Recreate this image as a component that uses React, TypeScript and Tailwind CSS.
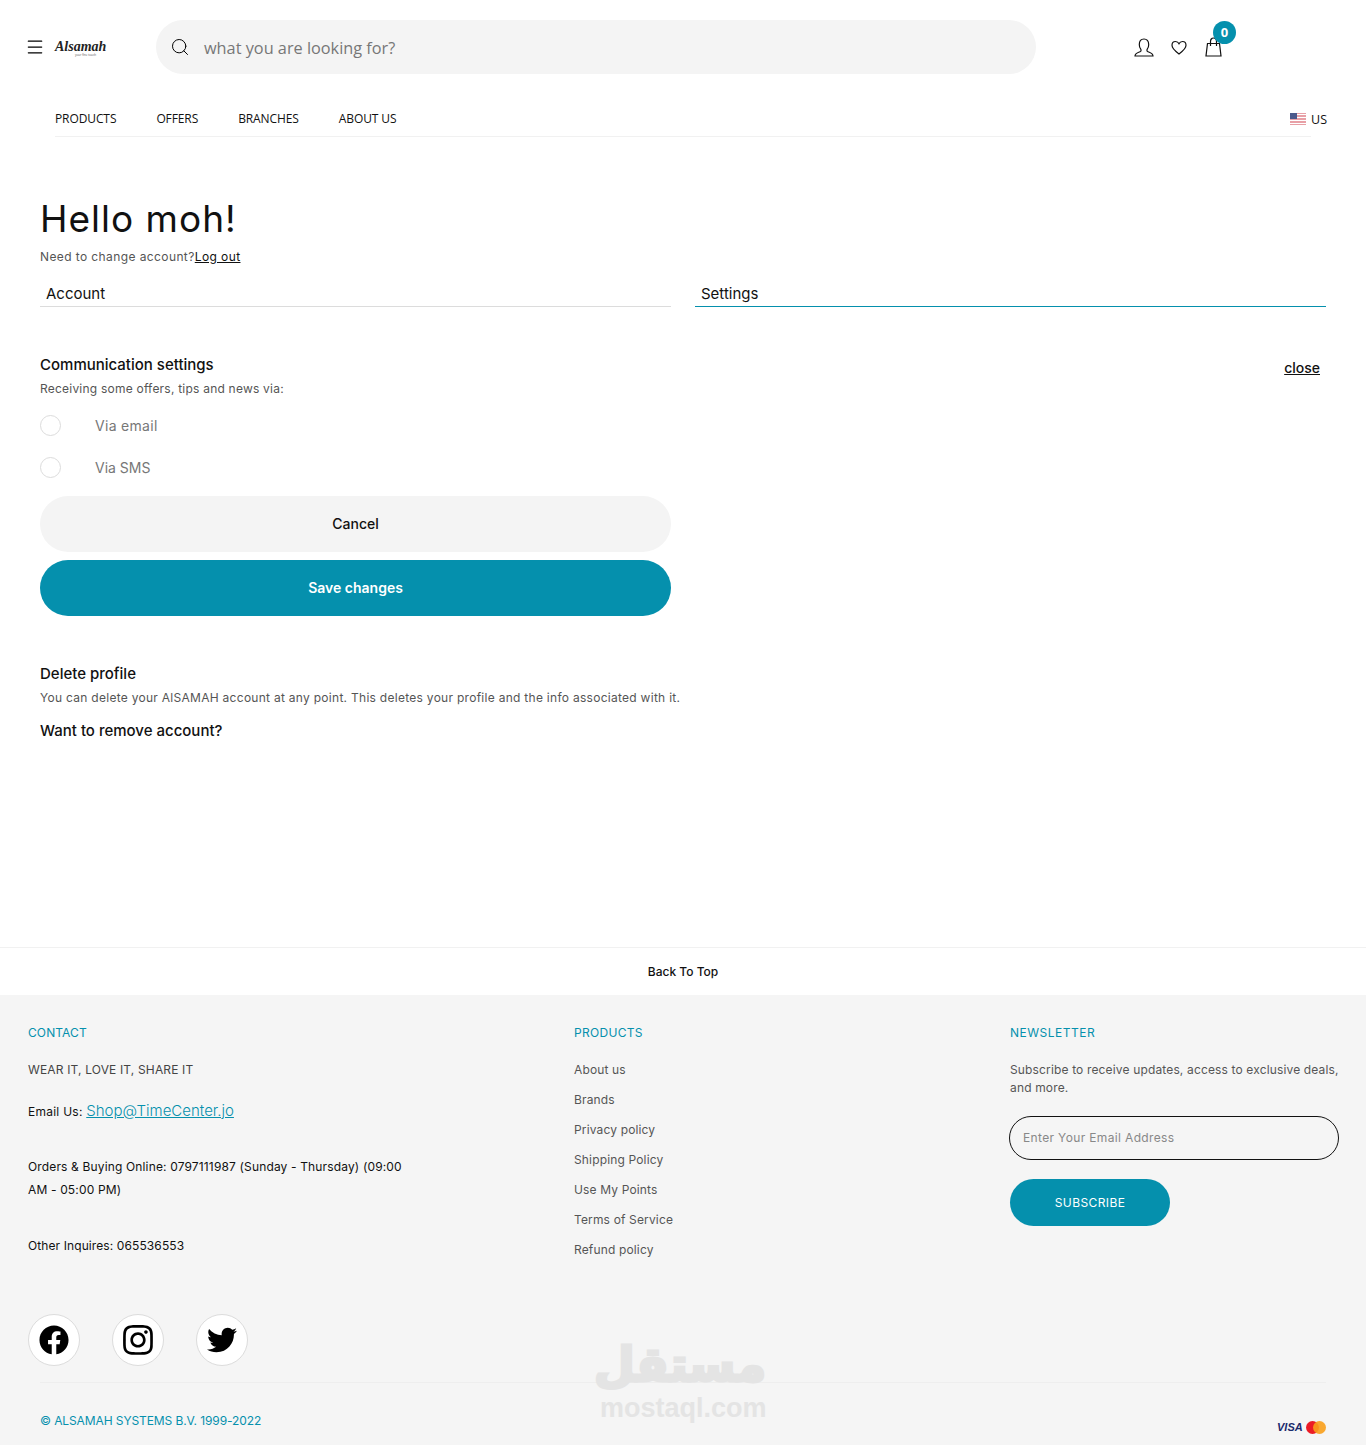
import { Search, Menu } from "lucide-react";
import { FaFacebook, FaInstagram, FaTwitter } from "react-icons/fa";

const mont = "font-['Inter',sans-serif]";
const productLinks = ["About us", "Brands", "Privacy policy", "Shipping Policy", "Use My Points", "Terms of Service", "Refund policy"];

function Header() {
  return (
    <header className="font-['Open_Sans',sans-serif]">
      <div className="flex h-[94px] items-center pl-[25px]">
        <Menu className="h-[20px] w-[20px] text-black" strokeWidth={1.5} />
        <div className="ml-[10px] mt-[2px] w-[101px] text-[#222]">
          <div className="font-['Liberation_Serif',serif] text-[14px] leading-[13px] font-bold italic">Alsamah</div>
          <div className="ml-[20px] text-[3px] leading-[4px] text-[#555]">your fine touch</div>
        </div>
        <div className="flex h-[54px] w-[880px] items-center rounded-[27px] bg-[#f4f4f4] pl-[14px]">
          <Search className="h-[20px] w-[20px] text-black" strokeWidth={1.2} />
          <span className="ml-[14px] mt-[2px] text-[16.300px] text-[#777]">what you are looking for?</span>
        </div>
        <div className="ml-[98px] flex items-center">
          <svg viewBox="0 0 20 19" className="h-[19px] w-[20px]" fill="none" stroke="#111" strokeWidth="1.2">
            <path d="M1 18c0-3 3-3.500 5.500-4.500.8-.5.6-2 .1-2.600C5.800 10 5.300 8.800 5.300 6.500 5.300 3 7.200 1 10 1s4.700 2 4.700 5.500c0 2.300-.5 3.500-1.300 4.400-.5.6-.7 2.100.1 2.600C16 14.500 19 15 19 18z" />
          </svg>
          <svg viewBox="0 0 16 15" className="ml-[17px] h-[15px] w-[16px]" fill="none" stroke="#111" strokeWidth="1.2">
            <path d="M8 14C4 11 1 8.500 1 5.300 1 3 2.700 1.500 4.500 1.500 6 1.500 7.300 2.300 8 3.700 8.700 2.300 10 1.500 11.500 1.500 13.300 1.500 15 3 15 5.300 15 8.500 12 11 8 14z" />
          </svg>
          <div className="relative ml-[18px]">
            <svg viewBox="0 0 17 20" className="h-[20px] w-[17px]" fill="none" stroke="#111" strokeWidth="1.2">
              <path d="M2.500 6.500h12L16 19H1z" />
              <path d="M5.500 9V4.500C5.500 2.500 6.800 1 8.500 1s3 1.500 3 3.500V9" />
            </svg>
            <span className="absolute left-[8px] top-[-16px] flex h-[23px] w-[23px] items-center justify-center rounded-full bg-[#0590ad] text-[13px] font-bold text-white">0</span>
          </div>
        </div>
      </div>
      <div className="relative mx-[55px] flex h-[43px] items-center border-b border-[#f1f1f1] pt-[8px] text-[12px] text-[#111]">
        <nav className="flex gap-[40px] tracking-[-.1px]">
          <span>PRODUCTS</span>
          <span>OFFERS</span>
          <span>BRANCHES</span>
          <span>ABOUT US</span>
        </nav>
        {/* language picker hangs past the end of the nav line */}
        <div className="absolute right-[-16px] top-[17px] flex items-center">
          <svg viewBox="0 0 16 12" className="h-[12px] w-[16px]">
            <rect width="16" height="12" fill="#e8a0a6" />
            <path d="M0 1.500h16M0 4.500h16M0 7.500h16M0 10.500h16" stroke="#fff" />
            <rect width="7" height="6" fill="#4c5a8c" />
          </svg>
          <span className="ml-[5px] mt-[2px] text-[12.500px] leading-[14px]">US</span>
        </div>
      </div>
    </header>
  );
}

function Main() {
  return (
    <main className={`${mont} h-[810px] px-[40px] pt-[58px]`}>
      <h1 className="text-[37px] leading-[48px] tracking-[1px] text-[#111]">Hello moh!</h1>
      <p className="mt-[6px] text-[12px] leading-[16px] tracking-[.4px] text-[#555]">
        Need to change account?<span className="text-[#111] underline">Log out</span>
      </p>
      <div className="mt-[17px] grid grid-cols-2 gap-[24px]">
        <div className="border-b border-[#dcdcdc] pl-[6px] text-[15px] leading-[24px] text-[#111]">Account</div>
        <div className="border-b border-[#0590ad] pl-[6px] text-[15px] leading-[24px] text-[#111]">Settings</div>
      </div>
      <div className="mt-[48px] flex justify-between">
        <div className="w-[631px]">
          <h2 className="text-[15px] leading-[20px] font-medium text-[#111]">Communication settings</h2>
          <p className="mt-[4px] text-[12px] leading-[20px] tracking-[.22px] text-[#555]">Receiving some offers, tips and news via:</p>
          <div className="mt-[16px] flex items-center">
            <span className="h-[21px] w-[21px] rounded-full border border-[#dcdcdc]" />
            <span className="ml-[34px] text-[14px] tracking-[.3px] text-[#777]">Via email</span>
          </div>
          <div className="mt-[21px] flex items-center">
            <span className="h-[21px] w-[21px] rounded-full border border-[#dcdcdc]" />
            <span className="ml-[34px] text-[14px] text-[#777]">Via SMS</span>
          </div>
          <button className="mt-[18px] block h-[56px] w-full rounded-[28px] bg-[#f4f4f4] pb-[2px] text-[14px] font-medium text-[#111]">Cancel</button>
          <button className="mt-[8px] block h-[56px] w-full rounded-[28px] bg-[#0590ad] pb-[2px] text-[14px] font-semibold text-white">Save changes</button>
        </div>
        <span className="mr-[6px] mt-[2px] text-[14px] font-medium text-[#111] underline">close</span>
      </div>
      <h2 className="mt-[48px] text-[15px] leading-[20px] font-medium text-[#111]">Delete profile</h2>
      <p className="mt-[4px] text-[12px] leading-[20px] tracking-[.28px] text-[#555]">You can delete your AlSAMAH account at any point. This deletes your profile and the info associated with it.</p>
      <p className="mt-[13px] text-[15px] leading-[20px] font-medium text-[#111]">Want to remove account?</p>
    </main>
  );
}

function Footer() {
  return (
    <footer className={`${mont} text-[12px]`}>
      <div className="flex h-[48px] items-center justify-center border-t border-[#f1f1f1] font-medium text-[#111]">Back To Top</div>
      <div className="relative h-[450px] bg-[#f5f5f5] pt-[29px]">
        <div className="flex pl-[28px]">
          <div className="w-[546px]">
            <h3 className="leading-[18px] tracking-[.1px] text-[#0590ad]">CONTACT</h3>
            <p className="mt-[19px] leading-[18px] tracking-[.15px] text-[#444]">WEAR IT, LOVE IT, SHARE IT</p>
            <p className="mt-[22px] leading-[20px] text-[#111]">
              <span className="tracking-[.25px]">Email Us: </span>
              <span className="text-[15px] font-light text-[#0590ad] underline">Shop@TimeCenter.jo</span>
            </p>
            <p className="mt-[33px] w-[385px] leading-[23px] tracking-[.15px] text-[#111]">Orders &amp; Buying Online: 0797111987 (Sunday - Thursday) (09:00 AM - 05:00 PM)</p>
            <p className="mt-[35px] leading-[20px] tracking-[.1px] text-[#111]">Other Inquires: 065536553</p>
          </div>
          <div className="w-[436px]">
            <h3 className="leading-[18px] tracking-[.3px] text-[#0590ad]">PRODUCTS</h3>
            <ul className="mt-[19px] flex flex-col gap-[12px] tracking-[.15px] text-[#555]">
              {productLinks.map((link) => (
                <li key={link} className="leading-[18px]">{link}</li>
              ))}
            </ul>
          </div>
          <div className="w-[330px]">
            <h3 className="leading-[18px] tracking-[.5px] text-[#0590ad]">NEWSLETTER</h3>
            <p className="mt-[19px] leading-[18px] tracking-[.15px] text-[#555]">Subscribe to receive updates, access to exclusive deals, and more.</p>
            <div className="-ml-[1px] mr-[1px] mt-[19px] flex h-[44px] items-center rounded-[22px] border border-[#111] pl-[13px] tracking-[.35px] text-[#888]">Enter Your Email Address</div>
            <button className="mt-[19px] block h-[47px] w-[160px] rounded-[24px] bg-[#0590ad] tracking-[.4px] text-white">SUBSCRIBE</button>
          </div>
        </div>
        <div className="absolute left-[28px] top-[319px] flex gap-[32px]">
          <span className="flex h-[52px] w-[52px] items-center justify-center rounded-full border border-[#dcdcdc] bg-white"><FaFacebook className="h-[30px] w-[30px] text-black" /></span>
          <span className="flex h-[52px] w-[52px] items-center justify-center rounded-full border border-[#dcdcdc] bg-white"><FaInstagram className="h-[34px] w-[34px] text-black" /></span>
          <span className="flex h-[52px] w-[52px] items-center justify-center rounded-full border border-[#dcdcdc] bg-white"><FaTwitter className="h-[30px] w-[30px] text-black" /></span>
        </div>
        <div className="absolute left-[40px] right-[40px] top-[387px] border-t border-[#eeeeee]" />
        <p className="absolute left-[40px] top-[417px] tracking-[-.1px] text-[#0590ad]">© ALSAMAH SYSTEMS B.V. 1999-2022</p>
        {/* watermark */}
        <div className="absolute left-[600px] top-[342px] w-[166px] text-center font-['Liberation_Sans',sans-serif] font-bold text-[#e4e4e4]">
          <div className="font-['DejaVu_Sans',sans-serif] text-[47px] leading-[56px] [-webkit-text-stroke:3px_#e4e4e4]" dir="rtl">مستقل</div>
          <div className="text-[27px] leading-[30px]">mostaql.com</div>
        </div>
        <div className="absolute left-[1277px] top-[426px] flex items-center">
          <span className="font-['Liberation_Sans',sans-serif] text-[11px] leading-[13px] font-bold italic text-[#1a2a6c]">VISA</span>
          <span className="ml-[3px] h-[13px] w-[13px] rounded-full bg-[#eb1c26]" />
          <span className="-ml-[6px] h-[13px] w-[13px] rounded-full bg-[#f9a01b] opacity-90" />
        </div>
      </div>
    </footer>
  );
}

export default function App() {
  return (
    <div className="min-h-[1449px] bg-white">
      <Header />
      <Main />
      <Footer />
    </div>
  );
}
